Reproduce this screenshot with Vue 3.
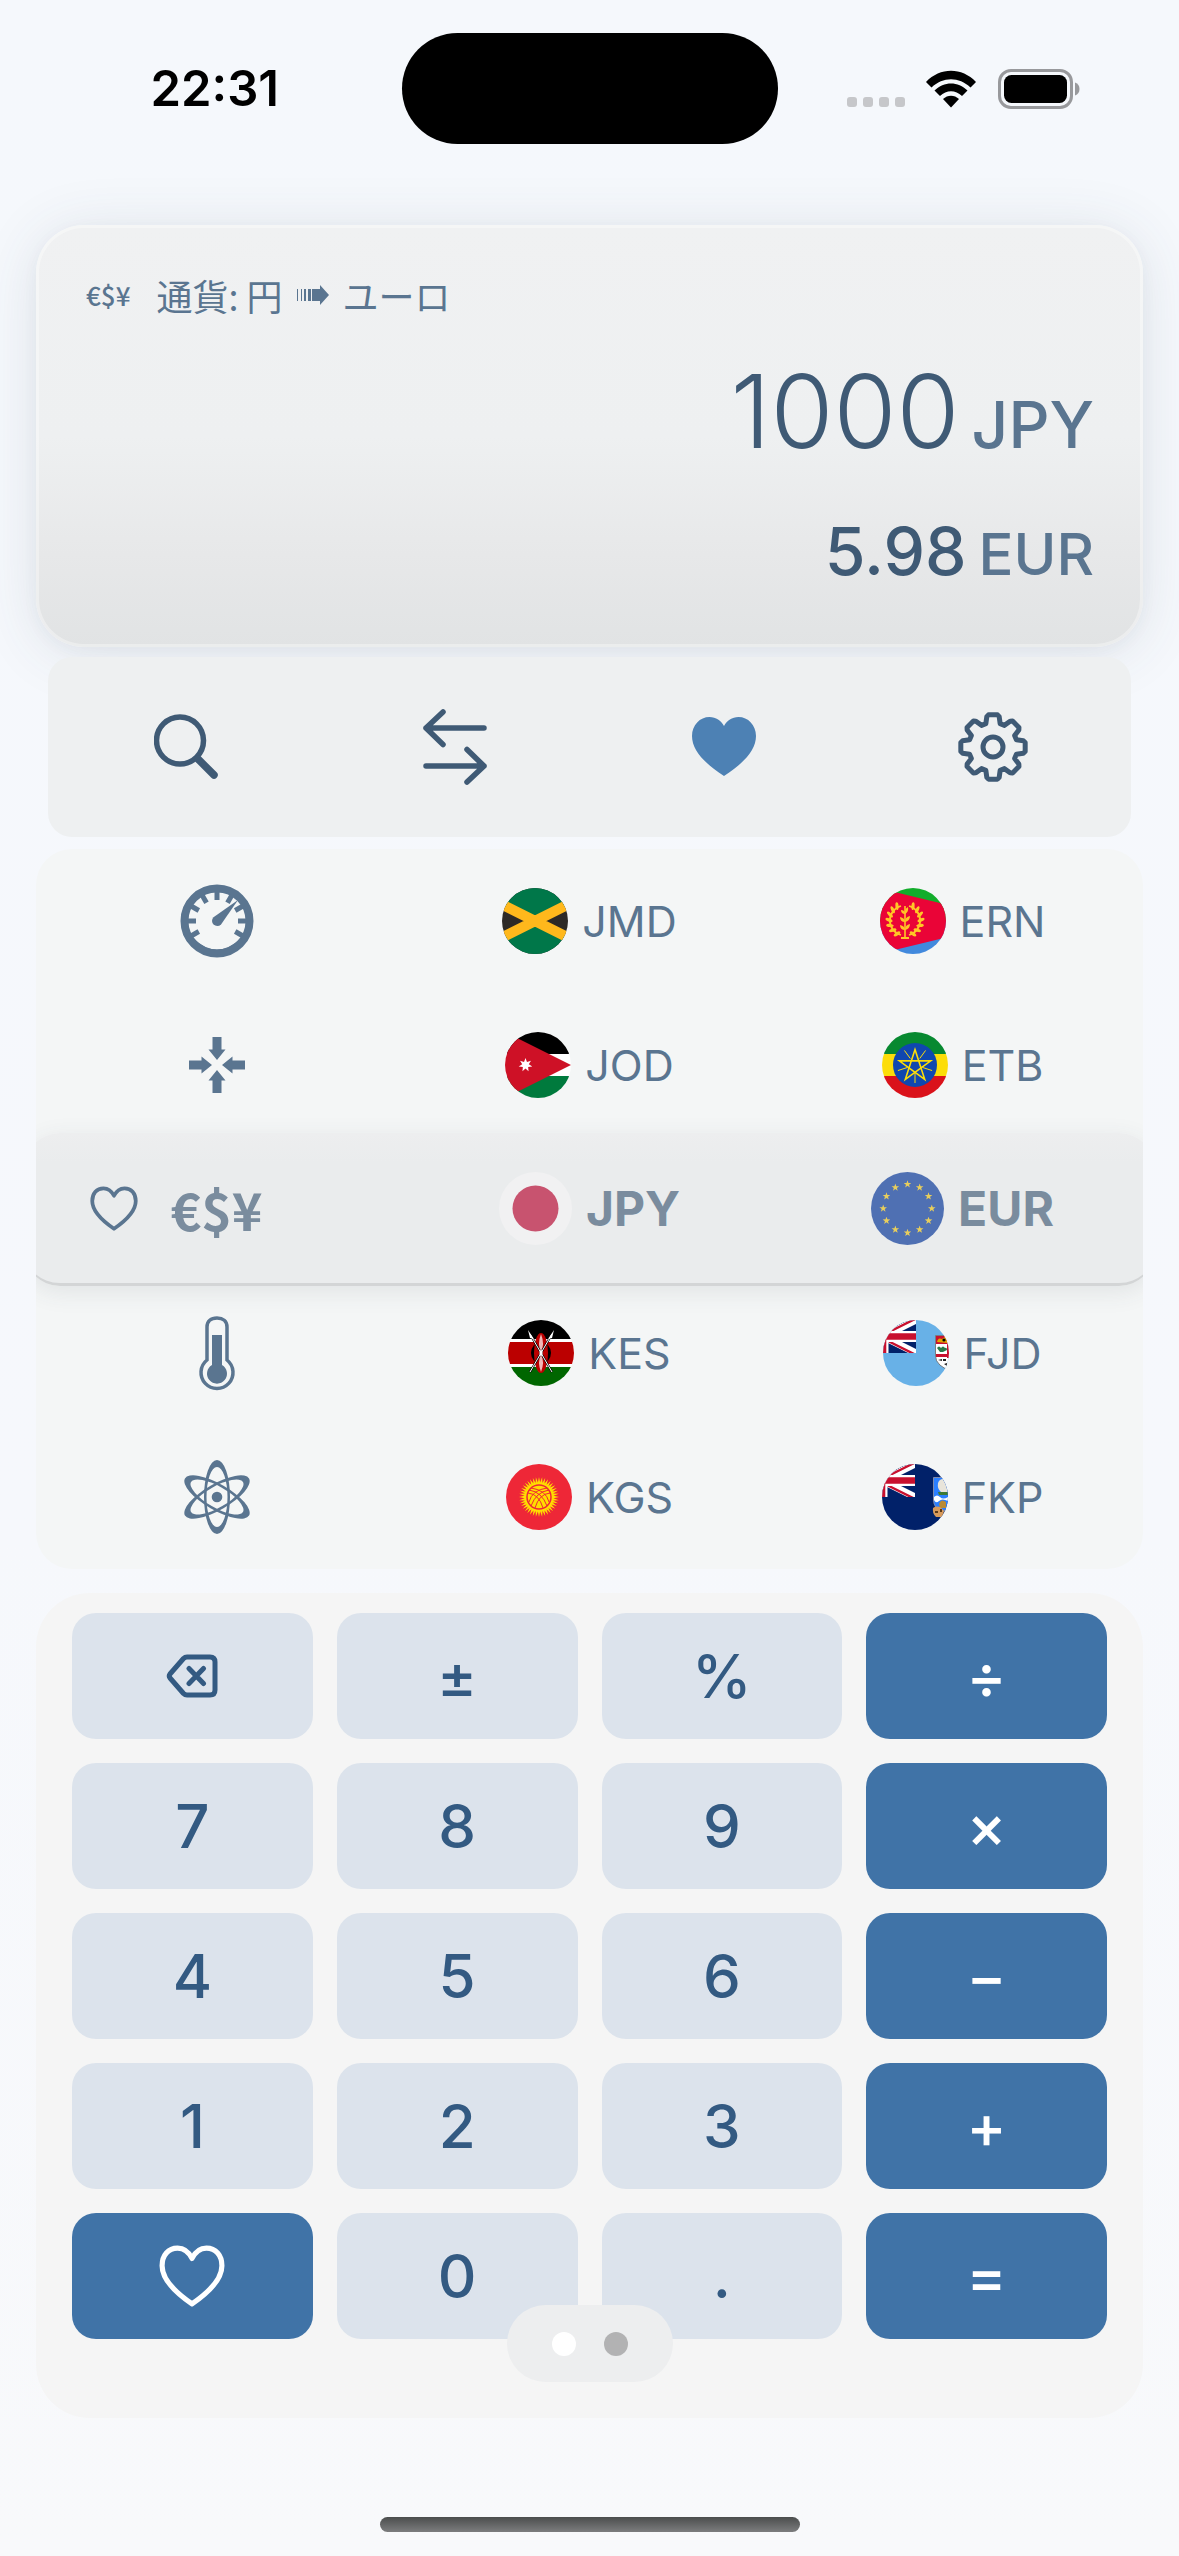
<script setup>
import { ref } from 'vue'

const amount = ref('1000')
const result = ref('5.98')

const rows = [
  { icon: 'gauge', name: '速度', from: 'JMD', to: 'ERN' },
  { icon: 'pressure', name: '圧力', from: 'JOD', to: 'ETB' },
  { icon: 'currency', name: '通貨', from: 'JPY', to: 'EUR', selected: true },
  { icon: 'thermometer', name: '温度', from: 'KES', to: 'FJD' },
  { icon: 'atom', name: 'エネルギー', from: 'KGS', to: 'FKP' },
]

const keys = [
  { id: 'back', icon: 'back', label: '削除' },
  { id: 'sign', text: '±' },
  { id: 'percent', text: '%' },
  { id: 'divide', text: '÷', primary: true },
  { id: '7', text: '7' },
  { id: '8', text: '8' },
  { id: '9', text: '9' },
  { id: 'multiply', text: '×', primary: true },
  { id: '4', text: '4' },
  { id: '5', text: '5' },
  { id: '6', text: '6' },
  { id: 'minus', text: '−', primary: true },
  { id: '1', text: '1' },
  { id: '2', text: '2' },
  { id: '3', text: '3' },
  { id: 'plus', text: '+', primary: true },
  { id: 'favorite', icon: 'heart', label: 'お気に入り', primary: true },
  { id: '0', text: '0' },
  { id: 'dot', text: '.' },
  { id: 'equals', text: '=', primary: true },
]

const heartPath =
  'M32 59C12 46 0 33 0 19C0 8 8 0 17.5 0C24 0 29 3.5 32 9C35 3.5 40 0 46.5 0C56 0 64 8 64 19C64 33 52 46 32 59Z'
const heartOutline =
  'M32 57C13 44 3 32 3 20C3 10 9 3 18 3C24.500 3 29 7 32 13C35 7 39.500 3 46 3C55 3 61 10 61 20C61 32 51 44 32 57Z'

function polar(cx, cy, r, deg) {
  const a = ((deg - 90) * Math.PI) / 180
  return [(cx + r * Math.cos(a)).toFixed(2), (cy + r * Math.sin(a)).toFixed(2)]
}

function star(cx, cy, outer, inner, count) {
  const pts = []
  for (let i = 0; i < count * 2; i++) {
    pts.push(polar(cx, cy, i % 2 ? inner : outer, (i * 180) / count).join(','))
  }
  return pts.join(' ')
}

function gear() {
  let d = ''
  for (let i = 0; i < 8; i++) {
    const a = i * 45
    const pts = [
      polar(36, 36, 24.5, a - 17),
      polar(36, 36, 31, a - 11.5),
      polar(36, 36, 32.5, a - 8),
      polar(36, 36, 32.5, a + 8),
      polar(36, 36, 31, a + 11.5),
      polar(36, 36, 24.5, a + 17),
    ]
    pts.forEach((p, k) => {
      d += (i === 0 && k === 0 ? 'M' : 'L') + p.join(' ')
    })
  }
  return d + 'Z'
}

const gearPath = gear()
const gaugeTicks = [-120, -90, -60, -30, 0, 30, 60, 90, 120]
const euStars = Array.from({ length: 12 }, (_, i) => {
  const p = polar(36.5, 36.5, 24.3, i * 30)
  return star(Number(p[0]), Number(p[1]), 4, 1.6, 5)
})
const sunRays = star(33, 33, 20, 14.5, 40)
const pentagram = [0, 144, 288, 72, 216].map((a) => polar(33, 34, 16.5, a).join(',')).join(' ')
const etRays = [36, 108, 180, 252, 324].map((a) => [polar(33, 33, 8, a), polar(33, 33, 18, a)])
const leaves = [-150, -130, -110, -90, -70, -50, -30, 30, 50, 70, 90, 110, 130, 150].map((a) => {
  const p = polar(25, 32, 16, a)
  return { x: p[0], y: p[1], a: a + (a > 0 ? -25 : 25) }
})
</script>

<template>
  <div class="screen">
    <header class="status">
      <time class="clock">22:31</time>
      <div class="island"></div>
      <div class="indicators">
        <span class="signal"><i></i><i></i><i></i><i></i></span>
        <svg class="wifi" viewBox="0 0 52 38" aria-hidden="true">
          <path d="M1 12C15-3 37-3 51 12L45.500 17.500C34 6.500 18 6.500 6.500 17.500Z" />
          <path d="M9.500 20.500C19 11 33 11 42.500 20.500L37 26C30.500 19.500 21.500 19.500 15 26Z" />
          <path d="M18 29C22.500 24.500 29.500 24.500 34 29L26 37.500Z" />
        </svg>
        <svg class="battery" viewBox="0 0 82 40" aria-hidden="true">
          <rect x="1.500" y="1.500" width="72" height="37" rx="11.500" fill="none" stroke="#98999c" stroke-width="3" />
          <rect x="6" y="6" width="63" height="28" rx="7.500" />
          <path d="M77 13.500C80 14.500 81.500 17 81.500 20S80 25.500 77 26.500Z" fill="#98999c" />
        </svg>
      </div>
    </header>

    <main>
      <section class="display">
        <p class="caption">
          <span class="money">€$¥</span>
          <span class="route">通貨: 円
            <svg class="route-arrow" viewBox="0 0 32 20" aria-hidden="true">
              <path d="M0 4h1v12h-1zM4 4h1v12h-1zM7 4h2v12h-2zM11 4h3v12h-3zM15 4h8v-4l9 10-9 10v-4h-8z" />
            </svg>
            ユーロ</span>
        </p>
        <p class="line from"><output class="value">{{ amount }}</output><span class="unit">JPY</span></p>
        <p class="line to"><output class="value">{{ result }}</output><span class="unit">EUR</span></p>
      </section>

      <nav class="toolbar">
        <button type="button" aria-label="検索">
          <svg width="64" height="66" viewBox="0 0 64 66" class="stroke">
            <circle cx="26" cy="26.500" r="23.500" stroke-width="5.500" />
            <path d="M44 45L60 61" stroke-width="7.500" />
          </svg>
        </button>
        <button type="button" aria-label="入れ替え">
          <svg width="64" height="76" viewBox="0 0 64 76" class="stroke">
            <path d="M61 19H3M20 3L3 19L20 35.500M3 57H61M44 40.500L61 57L44 73" stroke-width="5.500" />
          </svg>
        </button>
        <button type="button" aria-label="お気に入り">
          <svg width="64" height="60" viewBox="0 0 64 60"><path :d="heartPath" fill="#4d81b4" /></svg>
        </button>
        <button type="button" aria-label="設定">
          <svg width="72" height="72" viewBox="0 0 72 72" class="stroke">
            <path :d="gearPath" stroke-width="5" />
            <circle cx="36" cy="36" r="10" stroke-width="5" />
          </svg>
        </button>
      </nav>

      <section class="picker">
        <div v-for="row in rows" :key="row.icon" class="row" :class="{ selected: row.selected }">
          <button v-if="row.selected" type="button" class="mark" aria-label="お気に入りに追加">
            <svg width="48" height="45" viewBox="0 0 64 60" class="stroke">
              <path :d="heartOutline" stroke="#5a7590" stroke-width="5" />
            </svg>
          </button>

          <button type="button" class="cell" :aria-label="row.name">
            <svg v-if="row.icon === 'gauge'" width="74" height="74" viewBox="-37 -37 74 74" fill="#5a7590">
              <circle r="32.500" fill="none" stroke="#5a7590" stroke-width="8" />
              <rect v-for="a in gaugeTicks" :key="a" x="-2.500" y="-30" width="5" height="9" :transform="`rotate(${a})`" />
              <path d="M-24 17Q0 40 24 17L26 24Q0 44-26 24Z" />
              <path d="M21-21L-3.500-3.800A5 5 0 1 0 4 3.500Z" />
            </svg>
            <svg v-else-if="row.icon === 'pressure'" width="58" height="58" viewBox="-29 -29 58 58" fill="#5a7590">
              <path
                v-for="a in [0, 90, 180, 270]"
                :key="a"
                d="M-4.500-28h9v12.500h4L0-5L-8.500-15.500h4z"
                :transform="`rotate(${a})`"
              />
            </svg>
            <span v-else-if="row.icon === 'currency'" class="money">€$¥</span>
            <svg v-else-if="row.icon === 'thermometer'" width="38" height="76" viewBox="0 0 38 76" fill="#5a7590">
              <path
                d="M9 45V12C9 6 13 3 19 3S29 6 29 12V45A16 16 0 1 1 9 45Z"
                fill="none"
                stroke="#5a7590"
                stroke-width="3.500"
              />
              <path d="M14 20h10v30a10 10 0 1 1-10 0z" />
            </svg>
            <svg v-else width="76" height="76" viewBox="-38 -38 76 76" fill="#5a7590" fill-rule="evenodd">
              <path
                v-for="a in [0, 60, 120]"
                :key="a"
                d="M0-37A13 37 0 0 1 0 37A13 37 0 0 1 0-37ZM0-30A10.500 30 0 0 0 0 30A10.500 30 0 0 0 0-30Z"
                :transform="`rotate(${a})`"
              />
              <circle r="5.300" />
            </svg>
          </button>

          <button v-for="code in [row.from, row.to]" :key="code" type="button" class="cell">
            <svg class="flag" :viewBox="code === 'EUR' || code === 'JPY' ? '0 0 73 73' : '0 0 66 66'" aria-hidden="true">
              <template v-if="code === 'JMD'">
                <rect width="66" height="66" fill="#2d2926" />
                <path d="M-33 0H99L33 33ZM-33 66H99L33 33Z" fill="#007749" />
                <path d="M-33 0L99 66M99 0L-33 66" stroke="#ffb81c" stroke-width="10.500" />
              </template>
              <template v-else-if="code === 'JOD'">
                <rect width="66" height="66" fill="#fff" />
                <rect width="66" height="22" fill="#000" />
                <rect y="44" width="66" height="22" fill="#007a3d" />
                <path d="M0 0L66 33L0 66Z" fill="#ce1126" />
                <polygon :points="star(20.5, 33, 7, 3.4, 7)" fill="#fff" />
              </template>
              <template v-else-if="code === 'JPY'">
                <rect width="73" height="73" fill="#f1f1f2" />
                <circle cx="36.500" cy="36.500" r="23" fill="#c8536f" />
              </template>
              <template v-else-if="code === 'KES'">
                <rect width="66" height="66" fill="#fff" />
                <rect width="66" height="19" fill="#000" />
                <rect y="22" width="66" height="22" fill="#b00" />
                <rect y="47" width="66" height="19" fill="#060" />
                <ellipse cx="33" cy="33" rx="10" ry="11" fill="#000" />
                <ellipse cx="33" cy="33" rx="7" ry="20" fill="#b00" />
                <path d="M33 14Q37 24 33 32Q29 24 33 14ZM33 34Q37 42 33 52Q29 42 33 34Z" fill="#f0b8b8" />
                <path d="M22 52L44 14M44 52L22 14" stroke="#000" stroke-width="2.200" />
                <path d="M22 52L44 14M44 52L22 14" stroke="#fff" stroke-width="1" />
                <path d="M20 10L26 19L22 18ZM46 10L40 19L44 18Z" fill="#fff" />
                <ellipse cx="33" cy="33" rx="1.500" ry="3" fill="#fff" />
              </template>
              <template v-else-if="code === 'KGS'">
                <rect width="66" height="66" fill="#ee2737" />
                <polygon :points="sunRays" fill="#ffdd00" />
                <circle cx="33" cy="33" r="12" fill="#ffdd00" stroke="#ee2737" stroke-width="1.500" />
                <path
                  d="M23 26Q36 28 41 42M22 29Q33 30 37 44M25 24Q40 26 43 38M43 26Q30 28 25 42M44 29Q33 30 29 44M41 24Q26 26 23 38"
                  fill="none"
                  stroke="#ee2737"
                  stroke-width="1"
                />
              </template>
              <template v-else-if="code === 'ERN'">
                <rect width="66" height="33" fill="#12ad2b" />
                <rect y="33" width="66" height="33" fill="#4189dd" />
                <path d="M0 .500L66 16.500V49.500L0 65.500Z" fill="#ea0437" />
                <g fill="#ffc726">
                  <path d="M21 47A15 15 0 0 1 21 18M29 47A15 15 0 0 0 29 18" fill="none" stroke="#ffc726" stroke-width="1.800" />
                  <ellipse
                    v-for="l in leaves"
                    :key="l.a"
                    :cx="l.x"
                    :cy="l.y"
                    rx="1.600"
                    ry="3.800"
                    :transform="`rotate(${l.a} ${l.x} ${l.y})`"
                  />
                  <path d="M24.200 18h1.600v31h-1.600zM21 49h8v2h-8z" />
                  <path d="M25 26Q21 26 21 22Q25 22 25 26Q29 24 28 19Q24 21 25 26ZM25 34Q20 34 20 29Q25 30 25 34Q30 33 30 28Q25 29 25 34ZM25 42Q20 42 20 37Q25 38 25 42Q30 41 30 36Q25 37 25 42Z" />
                </g>
              </template>
              <template v-else-if="code === 'ETB'">
                <rect width="66" height="22" fill="#078930" />
                <rect y="22" width="66" height="22" fill="#fcdd09" />
                <rect y="44" width="66" height="22" fill="#da121a" />
                <circle cx="33" cy="33" r="22" fill="#0f47af" />
                <polygon :points="pentagram" fill="none" stroke="#fcdd09" stroke-width="1.600" />
                <line
                  v-for="(r, i) in etRays"
                  :key="i"
                  :x1="r[0][0]"
                  :y1="r[0][1]"
                  :x2="r[1][0]"
                  :y2="r[1][1]"
                  stroke="#fcdd09"
                  stroke-width="1"
                />
              </template>
              <template v-else-if="code === 'EUR'">
                <rect width="73" height="73" fill="#4f70b3" />
                <polygon v-for="(s, i) in euStars" :key="i" :points="s" fill="#e8ce5c" />
              </template>
              <template v-else>
                <rect width="66" height="66" :fill="code === 'FJD' ? '#68b1e7' : '#012169'" />
                <svg width="33" height="33" viewBox="0 0 33 33">
                  <rect width="33" height="33" fill="#012169" />
                  <path d="M-33 33L33 0M-33 0L33 33" stroke="#fff" stroke-width="7" />
                  <path d="M0 15L33-1.500M0 18.500L33 35" stroke="#c8102e" stroke-width="2.400" />
                  <path d="M0 0V33M0 16.500H33" stroke="#fff" stroke-width="11" />
                  <path d="M0 0V33M0 16.500H33" stroke="#c8102e" stroke-width="6.600" />
                </svg>
                <template v-if="code === 'FJD'">
                  <path d="M52.500 15.500H70V52Q52.500 46 52.500 36Z" fill="#fff" stroke="#666" stroke-width=".800" />
                  <rect x="53" y="16" width="14" height="8" fill="#c8102e" />
                  <path d="M54 22Q55 17 59 19L62 17Q66 18 65 23Z" fill="#e0a800" />
                  <circle cx="61" cy="20" r="1.600" fill="#000" />
                  <path d="M53 34h14v3h-14zM64 24h3v14h-3z" fill="#c8102e" />
                  <path d="M54 28Q56 25 58 28Q60 25 62 28Q64 27 64 30L60 32H57Z" fill="#287a4a" />
                  <path d="M55 40l4-1v2zM60 39h3v2h-3zM61 44l3-1v3z" fill="#222" />
                </template>
                <template v-else>
                  <path d="M51.500 13.500H70V36Q70 44 60 48Q51.500 44 51.500 36Z" fill="#2b7fff" stroke="#99a" stroke-width=".800" />
                  <path d="M56 19Q58 14 64 15L66 28H59Q55 25 56 19Z" fill="#e8e4da" />
                  <path d="M56 28H66V31H57Z" fill="#3d7a35" />
                  <path d="M52 33Q55 30 58 33T66 33V37Q60 34 57 37T52 36Z" fill="#fff" />
                  <path d="M57 40Q59 34 64 38V44H58Z" fill="#b98a35" />
                  <path d="M51 44Q57 40 62 47L60 53H54Q50 49 51 44Z" fill="#d79a5b" />
                  <path d="M53 47h3v2h-3zM58 45h2v3h-2z" fill="#5b3a1a" />
                </template>
              </template>
            </svg>
            <span>{{ code }}</span>
          </button>
        </div>
      </section>

      <section class="keypad">
        <button
          v-for="key in keys"
          :key="key.id"
          type="button"
          class="key"
          :class="{ primary: key.primary }"
          :aria-label="key.label"
        >
          <svg v-if="key.icon === 'back'" width="52" height="44" viewBox="0 0 52 44" class="stroke">
            <path
              d="M21 3H44Q49 3 49 8V36Q49 41 44 41H21Q19 41 17.500 39.500L4 24Q2.500 22 4 20L17.500 4.500Q19 3 21 3ZM23 14.500L37.500 29.500M37.500 14.500L23 29.500"
              stroke="#335a82"
              stroke-width="5"
            />
          </svg>
          <svg v-else-if="key.icon === 'heart'" width="66" height="62" viewBox="0 0 64 60" class="stroke">
            <path :d="heartOutline" stroke="#fff" stroke-width="5" />
          </svg>
          <span v-else>{{ key.text }}</span>
        </button>
        <div class="pager"><i class="on"></i><i></i></div>
      </section>
    </main>

    <footer class="home"><div class="home-bar"></div></footer>
  </div>
</template>

<style>
body {
  margin: 0;
  background: #f6f8fc;
}
</style>

<style scoped>
.screen {
  min-height: 100vh;
  display: flex;
  flex-direction: column;
  background: linear-gradient(#f5f8fc, #f6f8fc 60%, #f8f9fb);
  font-family: Inter, "Noto Sans CJK JP", sans-serif;
  color: #5a7590;
}

p {
  margin: 0;
}

button {
  border: 0;
  padding: 0;
  background: none;
  color: inherit;
  font: inherit;
  display: flex;
  align-items: center;
  justify-content: center;
}

svg {
  display: block;
  flex: none;
}

.stroke {
  fill: none;
  stroke: #3f5a75;
  stroke-linecap: round;
  stroke-linejoin: round;
}

.status {
  display: grid;
  grid-template-columns: 1fr 376px 1fr;
  align-items: center;
  height: 111px;
  padding: 33px 0 81px;
}

.clock {
  justify-self: center;
  padding-left: 28px;
  font-size: 49px;
  font-weight: 600;
  line-height: 60px;
  color: #000;
}

.island {
  height: 111px;
  border-radius: 56px;
  background: #000;
}

.indicators {
  display: flex;
  align-items: center;
  justify-content: flex-end;
  padding-right: 99px;
}

.signal {
  display: flex;
  gap: 6px;
  margin: 26px 20px 0 0;
}

.signal i {
  width: 10px;
  height: 10px;
  border-radius: 3px;
  background: #c6c7ca;
}

.wifi {
  width: 52px;
  height: 38px;
  margin-right: 21px;
}

.battery {
  width: 82px;
  height: 40px;
}

main {
  display: flex;
  flex-direction: column;
  padding: 0 36px;
}

.display {
  box-sizing: border-box;
  height: 422px;
  padding: 45px 46px 0 47px;
  border: 3px solid rgba(255, 255, 255, 0.35);
  border-radius: 48px;
  background: linear-gradient(#f0f1f2, #eef0f1 50%, #e7e8e9 78%, #e1e3e4) border-box;
  box-shadow: 0 6px 60px rgba(60, 70, 90, 0.12), 0 4px 16px rgba(60, 70, 90, 0.04);
}

.caption {
  display: flex;
  align-items: center;
  gap: 26px;
  font-size: 36px;
  line-height: 44px;
}

.money {
  font-family: "Noto Sans CJK JP", sans-serif;
  font-weight: 700;
}

.caption .money {
  font-size: 26px;
  font-weight: 500;
}

.route {
  display: flex;
  align-items: center;
  gap: 14px;
  font-family: "Noto Sans CJK JP", sans-serif;
  font-weight: 400;
}

.route-arrow {
  width: 32px;
  height: 20px;
  fill: #5a7590;
}

.line {
  display: flex;
  justify-content: flex-end;
  align-items: baseline;
  gap: 12px;
  font-weight: 500;
}

.value {
  color: #3f5a75;
}

.from {
  margin-top: 34px;
  line-height: 120px;
}

.from .value {
  font-size: 102px;
  font-weight: 300;
}

.from .unit {
  font-size: 64px;
}

.to {
  margin-top: 26px;
  line-height: 80px;
}

.to .value {
  font-size: 66px;
}

.to .unit {
  font-size: 58px;
}

.toolbar {
  display: grid;
  grid-template-columns: repeat(4, 1fr);
  height: 180px;
  margin: 10px 12px 0;
  padding: 0 4px;
  border-radius: 24px;
  background: #eef0f1;
}

.toolbar,
.picker,
.keypad {
  position: relative;
}

.picker {
  margin-top: 12px;
  border-radius: 36px;
  background: #f4f6f6;
  overflow: hidden;
}

.row {
  display: grid;
  grid-template-columns: repeat(3, 1fr);
  gap: 12px;
  height: 144px;
  font-size: 43px;
}

.cell {
  gap: 14px;
}

.flag {
  width: 66px;
  height: 66px;
  border-radius: 50%;
}

.row.selected {
  position: relative;
  z-index: 1;
  height: 150px;
  margin: -4px -12px -5px;
  padding: 0 12px;
  border-bottom: 3px solid #d3d5d6;
  border-radius: 36px;
  background: linear-gradient(#edeeef, #eaeced 20%, #eaeced);
  box-shadow: 0 6px 24px rgba(60, 70, 80, 0.1);
  color: #7a8c9e;
  font-size: 48px;
  font-weight: 700;
}

.selected .flag {
  width: 73px;
  height: 73px;
}

.selected .money {
  font-size: 52px;
}

.mark {
  position: absolute;
  left: 66px;
  top: 0;
  bottom: 0;
  width: 48px;
}

.keypad {
  display: grid;
  grid-template-columns: repeat(4, 1fr);
  gap: 24px;
  margin-top: 24px;
  padding: 20px 36px 79px;
  border-radius: 54px;
  background: #f5f5f5;
}

.key {
  height: 126px;
  border-radius: 24px;
  background: #dce3ec;
  color: #335a82;
  font-size: 60px;
  font-weight: 500;
  line-height: 72px;
}

.key.primary {
  background: #4073a7;
  color: #fff;
}

.pager {
  position: absolute;
  left: 50%;
  bottom: 36px;
  display: flex;
  align-items: center;
  justify-content: center;
  gap: 28px;
  width: 166px;
  height: 77px;
  border-radius: 39px;
  background: #edeeef;
  transform: translateX(-50%);
}

.pager i {
  width: 24px;
  height: 24px;
  border-radius: 50%;
  background: #b2b2b3;
}

.pager .on {
  background: #fff;
}

.home {
  display: flex;
  justify-content: center;
  margin-top: auto;
  padding: 99px 0 24px;
}

.home-bar {
  width: 420px;
  height: 15px;
  border-radius: 8px;
  background: linear-gradient(#4b4d4d, #7c7d7e);
}
</style>
